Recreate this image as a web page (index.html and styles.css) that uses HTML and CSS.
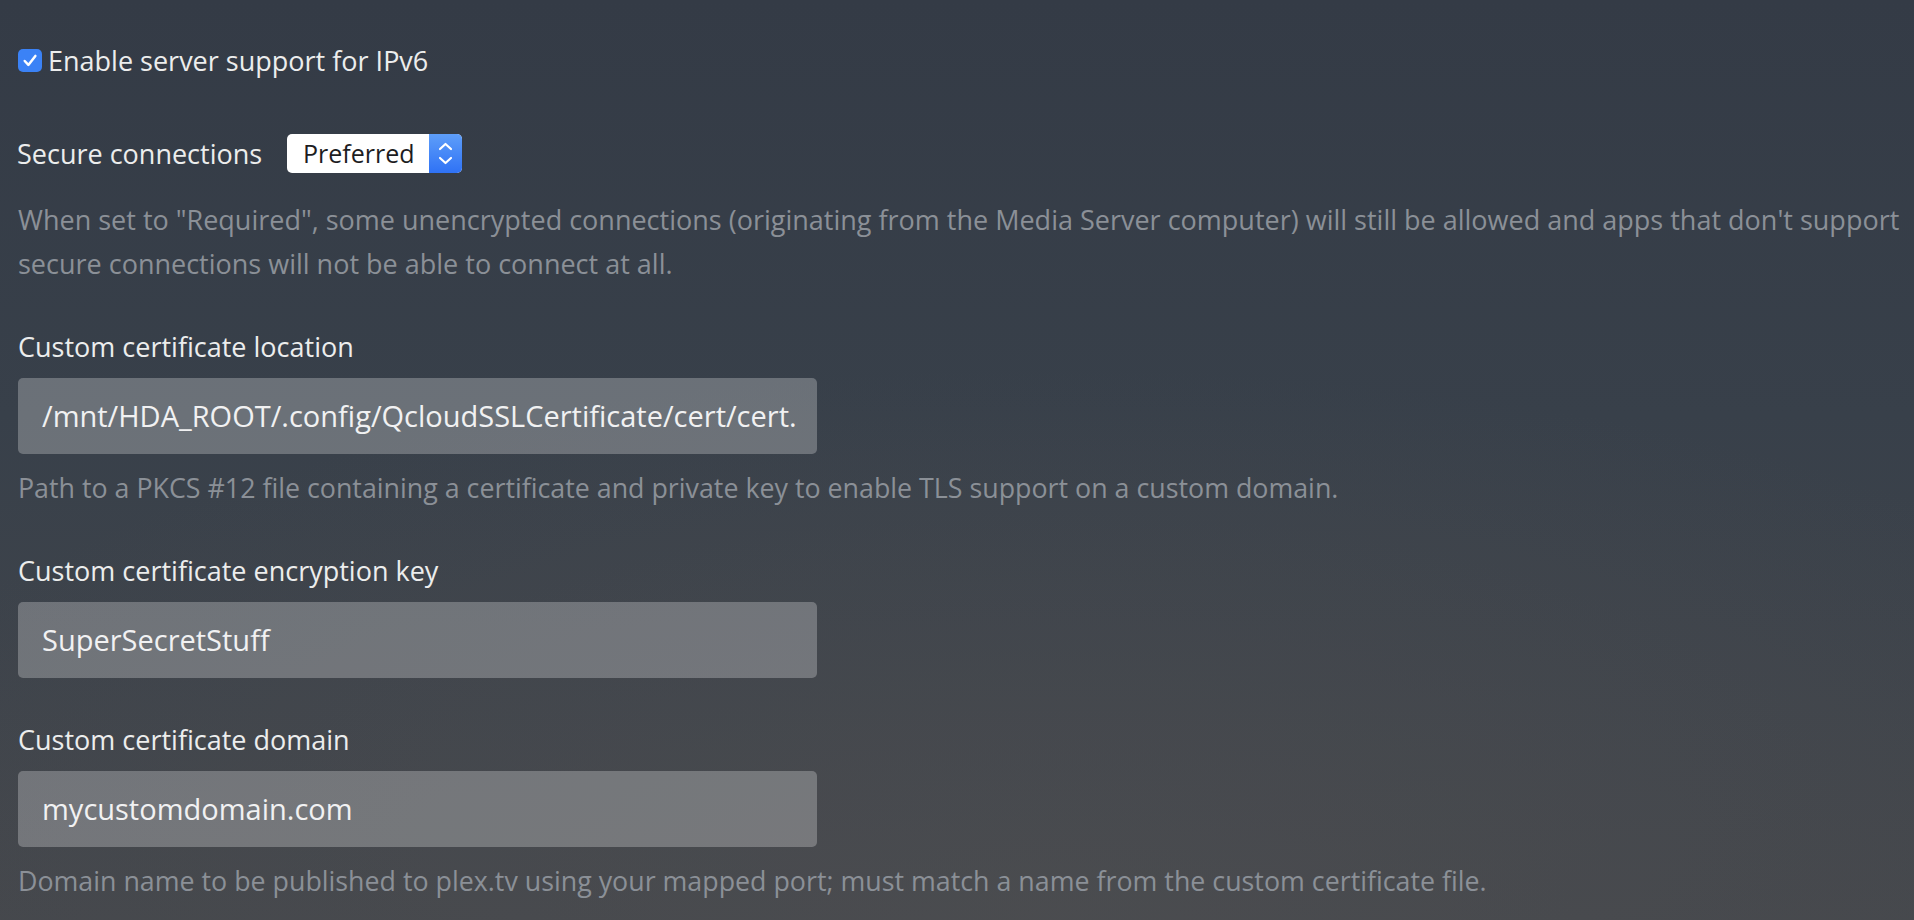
FILE: index.html
```html
<!DOCTYPE html>
<html lang="en">
<head>
<meta charset="utf-8">
<title>Network settings</title>
<link rel="stylesheet" href="styles.css">
</head>
<body>
<div class="page">
  <label class="check-row">
    <span class="checkbox">
      <svg viewBox="0 0 24 24" width="24" height="23"><path d="M6.5 12.5 L10.3 16.6 L17.6 7.2" fill="none" stroke="#fff" stroke-width="2.6" stroke-linecap="round" stroke-linejoin="round"/></svg>
    </span>
    <span class="check-label">Enable server support for IPv6</span>
  </label>

  <div class="select-row">
    <span class="select-label">Secure connections</span>
    <div class="select">
      <span class="select-value">Preferred</span>
      <span class="stepper">
        <svg viewBox="0 0 33 39" width="33" height="39"><path d="M11 15 L16.5 10 L22 15 M11 24 L16.5 29 L22 24" fill="none" stroke="#fff" stroke-width="2.2" stroke-linecap="round" stroke-linejoin="round"/></svg>
      </span>
    </div>
  </div>
  <p class="help help-wide">When set to "Required", some unencrypted connections (originating from the Media Server computer) will still be allowed and apps that don't support secure connections will not be able to connect at all.</p>

  <div class="field">
    <div class="field-label">Custom certificate location</div>
    <div class="input">/mnt/HDA_ROOT/.config/QcloudSSLCertificate/cert/cert.</div>
    <p class="help">Path to a PKCS #12 file containing a certificate and private key to enable TLS support on a custom domain.</p>
  </div>

  <div class="field">
    <div class="field-label">Custom certificate encryption key</div>
    <div class="input">SuperSecretStuff</div>
  </div>

  <div class="field">
    <div class="field-label">Custom certificate domain</div>
    <div class="input">mycustomdomain.com</div>
    <p class="help">Domain name to be published to plex.tv using your mapped port; must match a name from the custom certificate file.</p>
  </div>
</div>
</body>
</html>
```

FILE: styles.css
```css
html, body {
  margin: 0;
  padding: 0;
  height: 100%;
}
body {
  background:
    radial-gradient(ellipse 70% 60% at 55% 100%, rgba(80, 80, 82, 0.55), rgba(80, 80, 82, 0) 100%),
    linear-gradient(180deg, #343b46 0%, #38404a 45%, #44474c 100%);
  font-family: "Open Sans", "Noto Sans", sans-serif;
  color: #e8e9ea;
  overflow: hidden;
}
.page {
  padding: 44px 0 0 18px;
}
.check-row {
  display: flex;
  align-items: center;
  gap: 6px;
  height: 32px;
}
.checkbox {
  width: 24px;
  height: 23px;
  border-radius: 5px;
  background: #3b82f6;
  display: flex;
  flex: none;
}
.check-label {
  font-size: 27px;
  font-weight: 500;
  color: #eceded;
}
.select-row {
  display: flex;
  align-items: center;
  margin-top: 58px;
  height: 39px;
}
.select-label {
  font-size: 27px;
  font-weight: 500;
  color: #eceded;
  margin-left: -1px;
  width: 270px;
}
.select {
  display: flex;
  width: 175px;
  height: 39px;
  border-radius: 5px;
  background: #fff;
  overflow: hidden;
}
.select-value {
  flex: 1;
  padding-left: 16px;
  font-size: 25px;
  line-height: 39px;
  color: #1d1d1f;
}
.stepper {
  width: 33px;
  background: linear-gradient(180deg, #5e9ef9 0%, #2f72f5 100%);
  display: flex;
}
.help {
  margin: 0;
  font-size: 26.8px;
  line-height: 44px;
  color: #8b9097;
}
.help-wide {
  margin-top: 25px;
  font-size: 27px;
}
.field {
  margin-top: 44px;
}
.field + .field {
  margin-top: 44px;
}
.field:last-child {
  margin-top: 45px;
}
.field-label {
  font-size: 27px;
  font-weight: 500;
  line-height: 34px;
  color: #eceded;
}
.input {
  margin-top: 14px;
  width: 775px;
  height: 76px;
  border-radius: 5px;
  background: rgba(255, 255, 255, 0.26);
  padding-left: 24px;
  font-size: 29px;
  line-height: 76px;
  color: #f1f1f2;
  white-space: nowrap;
  overflow: hidden;
}
.input + .help {
  margin-top: 12px;
}
```
